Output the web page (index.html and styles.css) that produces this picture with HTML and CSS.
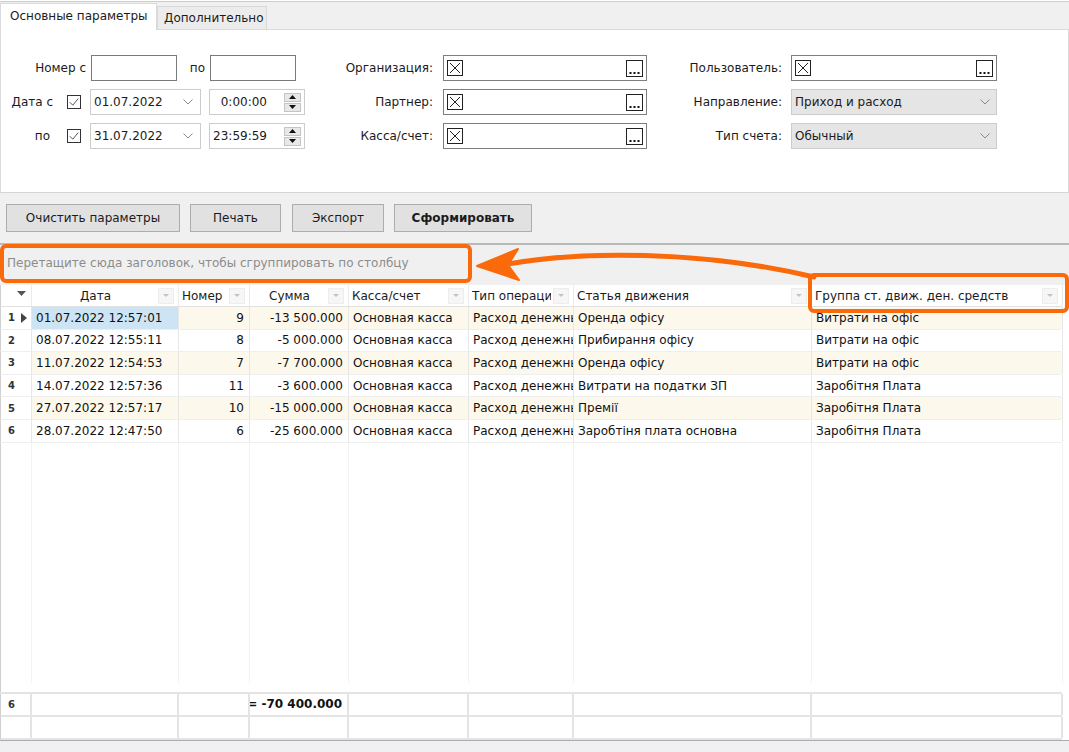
FILE: index.html
```html
<!DOCTYPE html>
<html lang="ru">
<head>
<meta charset="utf-8">
<title>Отчет</title>
<link rel="stylesheet" href="styles.css">
</head>
<body>
<div class="app">
  <div class="tabstrip">
    <div class="tab active">Основные параметры</div>
    <div class="tab">Дополнительно</div>
  </div>

  <div class="tabpage">
    <div class="form">
      <div class="blk-a">
        <div class="frow">
          <span class="lbl lbl-num">Номер с</span>
          <span class="edit edit-num"></span>
          <span class="lbl lbl-po">по</span>
          <span class="edit edit-num2"></span>
        </div>
        <div class="frow">
          <span class="lbl lblbox pr15">Дата с</span>
          <svg class="chk" width="14" height="14" viewBox="0 0 14 14"><rect x="0.5" y="0.5" width="13" height="13" fill="#fff" stroke="#333"/><polyline points="2.8,7.2 5.8,10.2 11.2,3.6" fill="none" stroke="#555" stroke-width="1"/></svg>
          <span class="combo date"><span class="ctext">01.07.2022</span><svg width="10" height="6" viewBox="0 0 10 6"><polyline points="0.5,0.5 5,5 9.5,0.5" fill="none" stroke="#8a8a8a" stroke-width="1"/></svg></span>
          <span class="timeedit"><span class="ttext">0:00:00</span><span class="spin"><span class="sb"><svg width="7" height="4" viewBox="0 0 7 4"><polygon points="0,4 3.5,0 7,4" fill="#111"/></svg></span><span class="sb"><svg width="7" height="4" viewBox="0 0 7 4"><polygon points="0,0 3.5,4 7,0" fill="#111"/></svg></span></span></span>
        </div>
        <div class="frow">
          <span class="lbl lblbox pr18">по</span>
          <svg class="chk" width="14" height="14" viewBox="0 0 14 14"><rect x="0.5" y="0.5" width="13" height="13" fill="#fff" stroke="#333"/><polyline points="2.8,7.2 5.8,10.2 11.2,3.6" fill="none" stroke="#555" stroke-width="1"/></svg>
          <span class="combo date"><span class="ctext">31.07.2022</span><svg width="10" height="6" viewBox="0 0 10 6"><polyline points="0.5,0.5 5,5 9.5,0.5" fill="none" stroke="#8a8a8a" stroke-width="1"/></svg></span>
          <span class="timeedit"><span class="ttext">23:59:59</span><span class="spin"><span class="sb"><svg width="7" height="4" viewBox="0 0 7 4"><polygon points="0,4 3.5,0 7,4" fill="#111"/></svg></span><span class="sb"><svg width="7" height="4" viewBox="0 0 7 4"><polygon points="0,0 3.5,4 7,0" fill="#111"/></svg></span></span></span>
        </div>
      </div>

      <div class="blk blk-b">
        <span class="blbl">Организация:</span>
        <span class="lookup"><svg width="16" height="16" viewBox="0 0 16 16"><rect x="0.5" y="0.5" width="15" height="15" fill="#fff" stroke="#222"/><path d="M3 3 L13 13 M13 3 L3 13" stroke="#222" stroke-width="1"/></svg><svg width="17" height="17" viewBox="0 0 17 17"><rect x="0.5" y="0.5" width="16" height="16" fill="#fff" stroke="#222"/><rect x="3.5" y="12" width="2" height="2" fill="#111"/><rect x="7.5" y="12" width="2" height="2" fill="#111"/><rect x="11.5" y="12" width="2" height="2" fill="#111"/></svg></span>
        <span class="blbl">Партнер:</span>
        <span class="lookup"><svg width="16" height="16" viewBox="0 0 16 16"><rect x="0.5" y="0.5" width="15" height="15" fill="#fff" stroke="#222"/><path d="M3 3 L13 13 M13 3 L3 13" stroke="#222" stroke-width="1"/></svg><svg width="17" height="17" viewBox="0 0 17 17"><rect x="0.5" y="0.5" width="16" height="16" fill="#fff" stroke="#222"/><rect x="3.5" y="12" width="2" height="2" fill="#111"/><rect x="7.5" y="12" width="2" height="2" fill="#111"/><rect x="11.5" y="12" width="2" height="2" fill="#111"/></svg></span>
        <span class="blbl">Касса/счет:</span>
        <span class="lookup"><svg width="16" height="16" viewBox="0 0 16 16"><rect x="0.5" y="0.5" width="15" height="15" fill="#fff" stroke="#222"/><path d="M3 3 L13 13 M13 3 L3 13" stroke="#222" stroke-width="1"/></svg><svg width="17" height="17" viewBox="0 0 17 17"><rect x="0.5" y="0.5" width="16" height="16" fill="#fff" stroke="#222"/><rect x="3.5" y="12" width="2" height="2" fill="#111"/><rect x="7.5" y="12" width="2" height="2" fill="#111"/><rect x="11.5" y="12" width="2" height="2" fill="#111"/></svg></span>
      </div>

      <div class="blk blk-c">
        <span class="blbl">Пользователь:</span>
        <span class="lookup"><svg width="16" height="16" viewBox="0 0 16 16"><rect x="0.5" y="0.5" width="15" height="15" fill="#fff" stroke="#222"/><path d="M3 3 L13 13 M13 3 L3 13" stroke="#222" stroke-width="1"/></svg><svg width="17" height="17" viewBox="0 0 17 17"><rect x="0.5" y="0.5" width="16" height="16" fill="#fff" stroke="#222"/><rect x="3.5" y="12" width="2" height="2" fill="#111"/><rect x="7.5" y="12" width="2" height="2" fill="#111"/><rect x="11.5" y="12" width="2" height="2" fill="#111"/></svg></span>
        <span class="blbl">Направление:</span>
        <span class="combo gray"><span class="ctext">Приход и расход</span><svg width="10" height="6" viewBox="0 0 10 6"><polyline points="0.5,0.5 5,5 9.5,0.5" fill="none" stroke="#8a8a8a" stroke-width="1"/></svg></span>
        <span class="blbl">Тип счета:</span>
        <span class="combo gray"><span class="ctext">Обычный</span><svg width="10" height="6" viewBox="0 0 10 6"><polyline points="0.5,0.5 5,5 9.5,0.5" fill="none" stroke="#8a8a8a" stroke-width="1"/></svg></span>
      </div>
    </div>
  </div>

  <div class="toolbar">
    <button class="btn w1">Очистить параметры</button>
    <button class="btn w2">Печать</button>
    <button class="btn w3">Экспорт</button>
    <button class="btn w4 bold">Сформировать</button>
  </div>

  <div class="grouppanel">Перетащите сюда заголовок, чтобы сгруппировать по столбцу</div>

  <div class="grid">
    <div class="grow ghead">
      <div class="hc ind"><svg width="9" height="5" viewBox="0 0 9 5"><polygon points="0,0 9,0 4.5,5" fill="#555"/></svg></div>
      <div class="hc ctr"><span class="ht">Дата</span><i class="flt"></i></div>
      <div class="hc"><span class="ht">Номер</span><i class="flt"></i></div>
      <div class="hc ctr"><span class="ht">Сумма</span><i class="flt"></i></div>
      <div class="hc"><span class="ht">Касса/счет</span><i class="flt"></i></div>
      <div class="hc"><span class="ht">Тип операции</span><i class="flt"></i></div>
      <div class="hc"><span class="ht">Статья движения</span><i class="flt"></i></div>
      <div class="hc"><span class="ht">Группа ст. движ. ден. средств</span><i class="flt"></i></div>
    </div>

    <div class="grow drow odd">
      <div class="ind"><span class="rn">1</span><svg width="6" height="10" viewBox="0 0 6 10"><polygon points="0,0 6,5 0,10" fill="#444"/></svg></div>
      <div class="sel">01.07.2022 12:57:01</div><div class="r">9</div><div class="r">-13 500.000</div><div>Основная касса</div><div>Расход денежных средств</div><div>Оренда офісу</div><div>Витрати на офіс</div>
    </div>
    <div class="grow drow">
      <div class="ind"><span class="rn">2</span></div>
      <div>08.07.2022 12:55:11</div><div class="r">8</div><div class="r">-5 000.000</div><div>Основная касса</div><div>Расход денежных средств</div><div>Прибирання офісу</div><div>Витрати на офіс</div>
    </div>
    <div class="grow drow odd">
      <div class="ind"><span class="rn">3</span></div>
      <div>11.07.2022 12:54:53</div><div class="r">7</div><div class="r">-7 700.000</div><div>Основная касса</div><div>Расход денежных средств</div><div>Оренда офісу</div><div>Витрати на офіс</div>
    </div>
    <div class="grow drow">
      <div class="ind"><span class="rn">4</span></div>
      <div>14.07.2022 12:57:36</div><div class="r">11</div><div class="r">-3 600.000</div><div>Основная касса</div><div>Расход денежных средств</div><div>Витрати на податки ЗП</div><div>Заробітня Плата</div>
    </div>
    <div class="grow drow odd">
      <div class="ind"><span class="rn">5</span></div>
      <div>27.07.2022 12:57:17</div><div class="r">10</div><div class="r">-15 000.000</div><div>Основная касса</div><div>Расход денежных средств</div><div>Премії</div><div>Заробітня Плата</div>
    </div>
    <div class="grow drow">
      <div class="ind"><span class="rn">6</span></div>
      <div>28.07.2022 12:47:50</div><div class="r">6</div><div class="r">-25 600.000</div><div>Основная касса</div><div>Расход денежных средств</div><div>Заробтіня плата основна</div><div>Заробітня Плата</div>
    </div>

    <div class="grow gfill"><div></div><div></div><div></div><div></div><div></div><div></div><div></div><div></div></div>
    <div class="gspacer"></div>

    <div class="gfoot">
      <div class="grow frow2">
        <div class="ind"><span class="rn">6</span></div><div></div><div></div><div class="r total">= -70 400.000</div><div></div><div></div><div></div><div></div>
      </div>
      <div class="grow frow2">
        <div class="ind"></div><div></div><div></div><div></div><div></div><div></div><div></div><div></div>
      </div>
    </div>
  </div>
  <div class="statusbar"></div>

  <div class="anno box1"></div>
  <div class="anno box2"></div>
  <svg class="anno arrow" width="1069" height="752" viewBox="0 0 1069 752">
    <path d="M 508 264 C 580 251, 700 250, 814 277" fill="none" stroke="#fa6a0a" stroke-width="5" stroke-linecap="round"/>
    <polygon points="477,266 518,249 508,265 519,280" fill="#fa6a0a" stroke="#fa6a0a" stroke-width="2" stroke-linejoin="round"/>
  </svg>
</div>
</body>
</html>
```

FILE: styles.css
```css
* { box-sizing: border-box; }
html, body { margin: 0; padding: 0; }
body {
  font-family: "DejaVu Sans", Verdana, sans-serif;
  font-size: 12px;
  color: #1b1b1b;
  background: #ffffff;
}
.app {
  position: relative;
  width: 1069px;
  height: 752px;
  display: flex;
  flex-direction: column;
  overflow: hidden;
  background: #ffffff;
}

/* tabs */
.tabstrip {
  margin-top: 1px;
  height: 29px;
  border-top: 1px solid #cdcdcd;
  border-bottom: 1px solid #dadada;
  background: #f0f0f0;
  display: flex;
  align-items: flex-end;
  flex: none;
}
.tab {
  height: 23px;
  padding: 0 0 0 6px;
  width: 110px;
  border: 1px solid #d9d9d9;
  border-bottom: none;
  background: #ececec;
  display: flex;
  align-items: center;
  line-height: 14px;
}
.tab.active {
  width: 157px;
  height: 27px;
  margin-bottom: -1px;
  padding-left: 9px;
  padding-bottom: 3px;
  background: #ffffff;
  border-color: #dadada;
}

.tabpage {
  height: 163px;
  flex: none;
  background: #ffffff;
  border-left: 1px solid #dadada;
  border-right: 1px solid #dadada;
  border-bottom: 1px solid #d4d4d4;
  padding-top: 25px;
}
.form { display: flex; }

.blk-a {
  width: 329px;
  display: flex;
  flex-direction: column;
  gap: 8px;
}
.frow {
  height: 26px;
  display: flex;
  align-items: center;
}
.lbl { white-space: nowrap; }
.lbl-num { width: 85px; text-align: right; }
.lbl-po { width: 33px; text-align: right; padding-right: 5px; }
.lblbox { width: 66px; text-align: right; }
.pr15 { padding-right: 14px; }
.pr18 { padding-right: 17px; }
.edit {
  height: 26px;
  border: 1px solid #7a7a7a;
  background: #fff;
}
.edit-num { width: 86px; margin-left: 5px; }
.edit-num2 { width: 86px; }
.chk { flex: none; }
.combo {
  height: 26px;
  border: 1px solid #cccccc;
  background: #fff;
  display: flex;
  align-items: center;
  padding: 0 7px 0 3px;
}
.combo .ctext { flex: 1; white-space: nowrap; }
.combo.date { width: 111px; margin-left: 9px; }
.combo.gray { background: #e5e5e5; width: 206px; padding-right: 6px; }
.timeedit {
  width: 96px;
  height: 26px;
  margin-left: 8px;
  border: 1px solid #cccccc;
  background: #fff;
  display: flex;
  align-items: center;
  padding: 0 3px 0 3px;
}
.ttext { flex: 1; text-align: right; padding-right: 17px; }
.spin {
  width: 17px;
  height: 19px;
  display: flex;
  flex-direction: column;
  gap: 1px;
}
.sb {
  flex: 1;
  background: #e8e8e8;
  border: 1px solid #c4c4c4;
  display: flex;
  align-items: center;
  justify-content: center;
}

.blk {
  display: grid;
  row-gap: 8px;
  column-gap: 10px;
  grid-auto-rows: 26px;
  align-items: center;
}
.blk-b { grid-template-columns: 103px 204px; }
.blk-c { grid-template-columns: 116px 206px; margin-left: 19px; column-gap: 9px; }
.blbl { text-align: right; white-space: nowrap; }
.lookup {
  height: 26px;
  border: 1px solid #7e7e7e;
  background: #fff;
  display: flex;
  align-items: center;
  justify-content: space-between;
  padding: 0 3px 0 3px;
}

/* toolbar */
.toolbar {
  flex: none;
  height: 52px;
  background: #f0f0f0;
  border-bottom: 2px solid #b9b9b9;
  padding: 11px 6px 0 6px;
  display: flex;
  align-items: flex-start;
  gap: 10px;
}
.btn {
  height: 28px;
  font: inherit;
  color: #1b1b1b;
  background: #e1e1e1;
  border: 1px solid #adadad;
  border-radius: 0;
  padding: 0;
}
.btn.w1 { width: 174px; }
.btn.w2 { width: 91px; }
.btn.w3 { width: 92px; margin-left: 1px; }
.btn.w4 { width: 138px; }
.btn.bold { font-weight: bold; }

.grouppanel {
  flex: none;
  height: 40px;
  background: #f0f0f0;
  color: #8c8c8c;
  padding: 11px 0 0 7px;
  line-height: 15px;
  white-space: nowrap;
}

/* grid */
.grid {
  flex: none;
  height: 456px;
  background: #ffffff;
  border-bottom: 1px solid #a9aab2;
  display: flex;
  flex-direction: column;
}
.grow {
  display: grid;
  grid-template-columns: 31px 147px 71px 99px 120px 105px 238px 251px;
  width: 1062px;
}
.grow > div {
  border-right: 1px solid #e6e6e6;
  overflow: hidden;
  white-space: nowrap;
  display: flex;
  align-items: center;
}
.ghead { height: 22px; border-bottom: 1px solid #e1e1e1; border-left: 1px solid #cfcfcf; }
.ghead > div { border-right-color: #ebebeb; }
.hc { padding-left: 3px; }
.hc .ht { flex: 1; overflow: hidden; white-space: nowrap; }
.hc.ctr .ht { text-align: center; }
.hc.ind { justify-content: flex-end; padding-right: 5px; padding-bottom: 4px; }
.flt {
  flex: none;
  width: 16px;
  height: 16px;
  margin: 0 4px 0 2px;
  background: #f6f6f6;
  border: 1px solid #ededed;
  display: flex;
  align-items: center;
  justify-content: center;
}
.flt::after {
  content: "";
  width: 0;
  height: 0;
  border-left: 3px solid transparent;
  border-right: 3px solid transparent;
  border-top: 3px solid #c2c2c2;
}

.drow {
  height: 22.6px;
  border-bottom: 1px solid #efefef;
  border-left: 1px solid #cfcfcf;
  color: #111;
}
.drow.odd > div { background: #fdf8ec; }
.drow > div { padding-left: 4px; }
.drow > div.r, .frow2 > div.r { justify-content: flex-end; padding-right: 5px; padding-left: 0; }
.drow.odd > div.sel, .drow > div.sel { background: #cde4f5; }
.drow > div.ind, .drow.odd > div.ind { background: #ffffff; padding-left: 7px; gap: 7px; }
.rn { font-size: 10px; font-weight: bold; color: #333; width: 6px; }

.gfill {
  height: 240px;
  border-left: 1px solid #cfcfcf;
}
.gfill > div { border-right-color: #f3f3f3; }
.gspacer { height: 9px; border-left: 1px solid #cfcfcf; width: 1062px; }

.gfoot {
  border-top: 2px solid #e4e4e4;
  width: 1062px;
}
.frow2 {
  height: 23px;
  border-bottom: 2px solid #e4e4e4;
  border-left: 1px solid #cfcfcf;
}
.frow2 > div { border-right: 2px solid #e4e4e4; }
.frow2 > div.ind { padding-left: 7px; }
.total { font-weight: bold; color: #111; padding-right: 4px; }

.statusbar { flex: 1; background: #f0f0f0; }

/* annotations */
.anno { position: absolute; pointer-events: none; }
.box1 {
  left: 0;
  top: 244px;
  width: 472px;
  height: 39px;
  border: 4px solid #fa6a0a;
  border-radius: 6px;
}
.box2 {
  left: 808px;
  top: 273px;
  width: 261px;
  height: 40px;
  border: 4px solid #fa6a0a;
  border-radius: 6px;
}
.arrow { left: 0; top: 0; }
```
